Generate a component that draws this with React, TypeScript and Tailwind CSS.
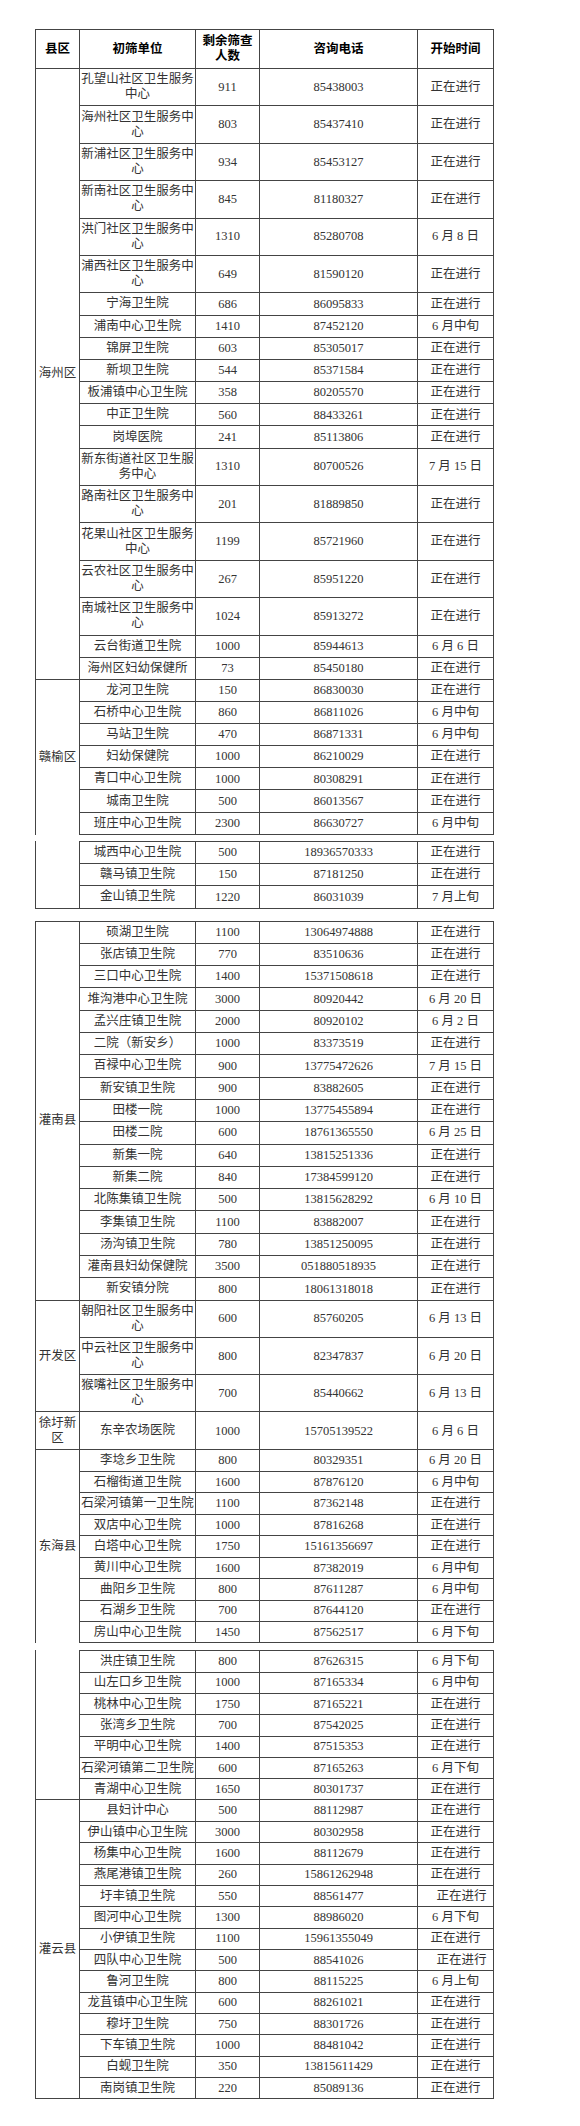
import * as React from "react";
import clsx from "clsx";

type Row = {
  name: string;
  left: string;
  phone: string;
  start: string;
  two?: boolean;
  shift?: boolean;
};

type Group = {
  label?: React.ReactNode;
  rows: Row[];
  h: string;
  dh?: string;
  top?: boolean;
  bottom?: boolean;
  rowsTop?: boolean;
  labelPad?: string;
};

const ON = "正在进行";

const r = (name: string, left: string, phone: string, start: string = ON, two = false, shift = false): Row => ({
  name,
  left,
  phone,
  start,
  two,
  shift,
});

const haizhou: Row[] = [
  r("孔望山社区卫生服务中心", "911", "85438003", ON, true),
  r("海州社区卫生服务中心", "803", "85437410", ON, true),
  r("新浦社区卫生服务中心", "934", "85453127", ON, true),
  r("新南社区卫生服务中心", "845", "81180327", ON, true),
  r("洪门社区卫生服务中心", "1310", "85280708", "6 月 8 日", true),
  r("浦西社区卫生服务中心", "649", "81590120", ON, true),
  r("宁海卫生院", "686", "86095833"),
  r("浦南中心卫生院", "1410", "87452120", "6 月中旬"),
  r("锦屏卫生院", "603", "85305017"),
  r("新坝卫生院", "544", "85371584"),
  r("板浦镇中心卫生院", "358", "80205570"),
  r("中正卫生院", "560", "88433261"),
  r("岗埠医院", "241", "85113806"),
  r("新东街道社区卫生服务中心", "1310", "80700526", "7 月 15 日", true),
  r("路南社区卫生服务中心", "201", "81889850", ON, true),
  r("花果山社区卫生服务中心", "1199", "85721960", ON, true),
  r("云农社区卫生服务中心", "267", "85951220", ON, true),
  r("南城社区卫生服务中心", "1024", "85913272", ON, true),
  r("云台街道卫生院", "1000", "85944613", "6 月 6 日"),
  r("海州区妇幼保健所", "73", "85450180"),
];

const ganyu: Row[] = [
  r("龙河卫生院", "150", "86830030"),
  r("石桥中心卫生院", "860", "86811026", "6 月中旬"),
  r("马站卫生院", "470", "86871331", "6 月中旬"),
  r("妇幼保健院", "1000", "86210029"),
  r("青口中心卫生院", "1000", "80308291"),
  r("城南卫生院", "500", "86013567"),
  r("班庄中心卫生院", "2300", "86630727", "6 月中旬"),
];

const ganyu2: Row[] = [
  r("城西中心卫生院", "500", "18936570333"),
  r("赣马镇卫生院", "150", "87181250"),
  r("金山镇卫生院", "1220", "86031039", "7 月上旬"),
];

const guannan: Row[] = [
  r("硕湖卫生院", "1100", "13064974888"),
  r("张店镇卫生院", "770", "83510636"),
  r("三口中心卫生院", "1400", "15371508618"),
  r("堆沟港中心卫生院", "3000", "80920442", "6 月 20 日"),
  r("孟兴庄镇卫生院", "2000", "80920102", "6 月 2 日"),
  r("二院（新安乡）", "1000", "83373519"),
  r("百禄中心卫生院", "900", "13775472626", "7 月 15 日"),
  r("新安镇卫生院", "900", "83882605"),
  r("田楼一院", "1000", "13775455894"),
  r("田楼二院", "600", "18761365550", "6 月 25 日"),
  r("新集一院", "640", "13815251336"),
  r("新集二院", "840", "17384599120"),
  r("北陈集镇卫生院", "500", "13815628292", "6 月 10 日"),
  r("李集镇卫生院", "1100", "83882007"),
  r("汤沟镇卫生院", "780", "13851250095"),
  r("灌南县妇幼保健院", "3500", "051880518935"),
  r("新安镇分院", "800", "18061318018"),
];

const kaifa: Row[] = [
  r("朝阳社区卫生服务中心", "600", "85760205", "6 月 13 日", true),
  r("中云社区卫生服务中心", "800", "82347837", "6 月 20 日", true),
  r("猴嘴社区卫生服务中心", "700", "85440662", "6 月 13 日", true),
];

const xuwei: Row[] = [r("东辛农场医院", "1000", "15705139522", "6 月 6 日", true)];

const donghai: Row[] = [
  r("李埝乡卫生院", "800", "80329351", "6 月 20 日"),
  r("石榴街道卫生院", "1600", "87876120", "6 月中旬"),
  r("石梁河镇第一卫生院", "1100", "87362148"),
  r("双店中心卫生院", "1000", "87816268"),
  r("白塔中心卫生院", "1750", "15161356697"),
  r("黄川中心卫生院", "1600", "87382019", "6 月中旬"),
  r("曲阳乡卫生院", "800", "87611287", "6 月中旬"),
  r("石湖乡卫生院", "700", "87644120"),
  r("房山中心卫生院", "1450", "87562517", "6 月下旬"),
];

const donghai2: Row[] = [
  r("洪庄镇卫生院", "800", "87626315", "6 月下旬"),
  r("山左口乡卫生院", "1000", "87165334", "6 月中旬"),
  r("桃林中心卫生院", "1750", "87165221"),
  r("张湾乡卫生院", "700", "87542025"),
  r("平明中心卫生院", "1400", "87515353"),
  r("石梁河镇第二卫生院", "600", "87165263", "6 月下旬"),
  r("青湖中心卫生院", "1650", "80301737"),
];

const guanyun: Row[] = [
  r("县妇计中心", "500", "88112987"),
  r("伊山镇中心卫生院", "3000", "80302958"),
  r("杨集中心卫生院", "1600", "88112679"),
  r("燕尾港镇卫生院", "260", "15861262948"),
  r("圩丰镇卫生院", "550", "88561477", ON, false, true),
  r("图河中心卫生院", "1300", "88986020", "6 月下旬"),
  r("小伊镇卫生院", "1100", "15961355049"),
  r("四队中心卫生院", "500", "88541026", ON, false, true),
  r("鲁河卫生院", "800", "88115225", "6 月上旬"),
  r("龙苴镇中心卫生院", "600", "88261021"),
  r("穆圩卫生院", "750", "88301726"),
  r("下车镇卫生院", "1000", "88481042"),
  r("白蚬卫生院", "350", "13815611429"),
  r("南岗镇卫生院", "220", "85089136"),
];

const line = "border-[#444]";
const cell = "flex items-center justify-center text-center border-r border-[#444] shrink-0";

function RowLine({ row, h, dh }: { row: Row; h: string; dh?: string }) {
  return (
    <div className={clsx("flex border-b", line, row.two ? dh : h)}>
      <div className={clsx(cell, "w-[116px] px-px leading-[15px]")}>{row.name}</div>
      <div className={clsx(cell, "w-[64px]")}>{row.left}</div>
      <div className={clsx(cell, "w-[158px]")}>{row.phone}</div>
      <div className={clsx(cell, "w-[76px]", row.shift && "pl-[12px]")}>{row.start}</div>
    </div>
  );
}

function GroupBlock({ g }: { g: Group }) {
  return (
    <div className="flex">
      <div
        className={clsx(
          "w-[44px] shrink-0 border-l flex items-center justify-center text-center leading-[15px] px-px",
          line,
          g.top && "border-t",
          g.bottom && "border-b",
          g.labelPad
        )}
      >
        {g.label}
      </div>
      <div className={clsx("flex flex-col border-l", line, g.rowsTop && "border-t")}>
        {g.rows.map((row) => (
          <RowLine key={row.name} row={row} h={g.h} dh={g.dh} />
        ))}
      </div>
    </div>
  );
}

function Header() {
  const head = "flex items-center justify-center text-center border-r border-[#444] shrink-0 font-bold text-black leading-[15px]";
  return (
    <div className="flex">
      <div className={clsx("w-[44px] shrink-0 border-l border-t border-b flex items-center justify-center font-bold text-black", line)}>
        县区
      </div>
      <div className={clsx("flex border-l border-t border-b h-[40px]", line)}>
        <div className={clsx(head, "w-[116px]")}>初筛单位</div>
        <div className={clsx(head, "w-[64px]")}>
          剩余筛查
          <br />
          人数
        </div>
        <div className={clsx(head, "w-[158px]")}>咨询电话</div>
        <div className={clsx(head, "w-[76px]")}>开始时间</div>
      </div>
    </div>
  );
}

export default function App() {
  return (
    <div
      className="min-h-[2126px] w-[580px] bg-white pt-[29px] pl-[35px] text-[12.5px] text-[#333]"
      style={{ fontFamily: '"Liberation Serif", "Noto Sans CJK SC", serif' }}
    >
      <div className="flex flex-col">
        <Header />
        <GroupBlock g={{ label: "海州区", rows: haizhou, h: "h-[22.2px]", dh: "h-[37.4px]", bottom: true }} />
        <GroupBlock g={{ label: "赣榆区", rows: ganyu, h: "h-[22.1px]" }} />
      </div>

      <div className="mt-[6px] flex flex-col">
        <GroupBlock g={{ rows: ganyu2, h: "h-[22.3px]", bottom: true, rowsTop: true }} />
      </div>

      <div className="mt-[12px] flex flex-col">
        <GroupBlock
          g={{ label: "灌南县", rows: guannan, h: "h-[22.3px]", top: true, bottom: true, rowsTop: true, labelPad: "pt-[20px]" }}
        />
        <GroupBlock g={{ label: "开发区", rows: kaifa, h: "h-[22.3px]", dh: "h-[37.3px]", bottom: true }} />
        <GroupBlock g={{ label: "徐圩新区", rows: xuwei, h: "h-[22.3px]", dh: "h-[38px]", bottom: true }} />
        <GroupBlock g={{ label: "东海县", rows: donghai, h: "h-[21.45px]" }} />
      </div>

      <div className="mt-[7px] flex flex-col">
        <GroupBlock g={{ rows: donghai2, h: "h-[21.3px]", bottom: true, rowsTop: true }} />
        <GroupBlock g={{ label: "灌云县", rows: guanyun, h: "h-[21.35px]", bottom: true }} />
      </div>
    </div>
  );
}
